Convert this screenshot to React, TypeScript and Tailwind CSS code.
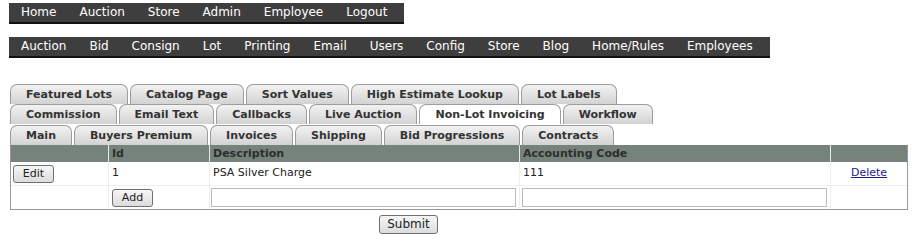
import React from "react";

const topLinks = ["Home", "Auction", "Store", "Admin", "Employee", "Logout"];
const adminLinks = [
  "Auction",
  "Bid",
  "Consign",
  "Lot",
  "Printing",
  "Email",
  "Users",
  "Config",
  "Store",
  "Blog",
  "Home/Rules",
  "Employees",
];

const tabRows = [
  ["Featured Lots", "Catalog Page", "Sort Values", "High Estimate Lookup", "Lot Labels"],
  ["Commission", "Email Text", "Callbacks", "Live Auction", "Non-Lot Invoicing", "Workflow"],
  ["Main", "Buyers Premium", "Invoices", "Shipping", "Bid Progressions", "Contracts"],
];

const NavBar = ({ links }: { links: string[] }) => (
  <div className="flex w-fit h-[21px] items-center bg-[#3f3e3e] border-b-2 border-[#111] pr-[6px]">
    {links.map((link, i) => (
      <a key={i} className="pl-[12px] pr-[11px] text-[12px] leading-[19px] text-white">
        {link}
      </a>
    ))}
  </div>
);

const Tab = ({ label, active }: { label: string; active?: boolean }) => (
  <div
    className={
      "h-[20px] px-[15px] mr-[2px] rounded-t-[7px] border border-b-0 border-[#9c9c9c] text-[11px] font-bold leading-[19px] text-[#333] " +
      (active ? "bg-white" : "bg-gradient-to-b from-[#f2f2f2] to-[#d3d3d3]")
    }
  >
    {label}
  </div>
);

const Button = ({ label, className }: { label: string; className?: string }) => (
  <button
    className={
      "h-[18px] rounded-[3px] border border-[#707070] bg-gradient-to-b from-[#f6f6f6] to-[#dcdcdc] text-[11px] leading-[15px] text-[#222] " +
      (className ?? "")
    }
  >
    {label}
  </button>
);

export default function App() {
  return (
    <div className="bg-white w-[919px] h-[243px] pt-[3px] pl-[9px] font-['DejaVu_Sans','Verdana',sans-serif] text-[#222]">
      <NavBar links={topLinks} />
      <div className="mt-[13px]">
        <NavBar links={adminLinks} />
      </div>

      {/* tabs */}
      <div className="mt-[26px] pl-[1px] flex flex-col">
        {tabRows.map((row, r) => (
          <div key={r} className={"flex" + (r === 2 ? " mt-[1px]" : "")}>
            {row.map((label) => (
              <Tab key={label} label={label} active={label === "Non-Lot Invoicing"} />
            ))}
          </div>
        ))}
      </div>

      {/* table */}
      <div className="ml-[1px] w-[898px] border border-[#999] border-t-0 text-[11px]">
        <div className="flex h-[17px] bg-[#75837a] font-bold text-[#2e2e2e] leading-[17px]">
          <div className="w-[98px] border-r border-[#e8e8e8]" />
          <div className="w-[101px] pl-[3px] border-r border-[#e8e8e8]">Id</div>
          <div className="w-[310px] pl-[3px] border-r border-[#e8e8e8]">Description</div>
          <div className="w-[311px] pl-[3px] border-r border-[#e8e8e8]">Accounting Code</div>
          <div className="flex-1" />
        </div>
        <div className="flex h-[24px] items-center border-b border-[#eee]">
          <div className="w-[98px] h-full flex items-center pl-[2px] border-r border-[#eee]">
            <Button label="Edit" className="w-[41px]" />
          </div>
          <div className="w-[101px] h-full flex items-center pl-[3px] border-r border-[#eee]">1</div>
          <div className="w-[310px] h-full flex items-center pl-[3px] border-r border-[#eee]">
            PSA Silver Charge
          </div>
          <div className="w-[311px] h-full flex items-center pl-[3px] border-r border-[#eee]">111</div>
          <div className="flex-1 h-full flex items-center justify-center">
            <a className="text-[#1a1a8f] underline">Delete</a>
          </div>
        </div>
        <div className="flex h-[23px] items-center">
          <div className="w-[98px] h-full border-r border-[#eee]" />
          <div className="w-[101px] h-full flex items-center pl-[3px] border-r border-[#eee]">
            <Button label="Add" className="w-[41px]" />
          </div>
          <div className="w-[310px] h-full flex items-center pl-[1px] border-r border-[#eee]">
            <input className="w-[305px] h-[19px] border border-[#bbb] bg-white" />
          </div>
          <div className="w-[311px] h-full flex items-center pl-[2px] border-r border-[#eee]">
            <input className="w-[305px] h-[19px] border border-[#bbb] bg-white" />
          </div>
          <div className="flex-1" />
        </div>
      </div>

      <div className="pl-[370px] mt-[1px]">
        <Button label="Submit" className="w-[59px] h-[19px] text-[12px]" />
      </div>
    </div>
  );
}
